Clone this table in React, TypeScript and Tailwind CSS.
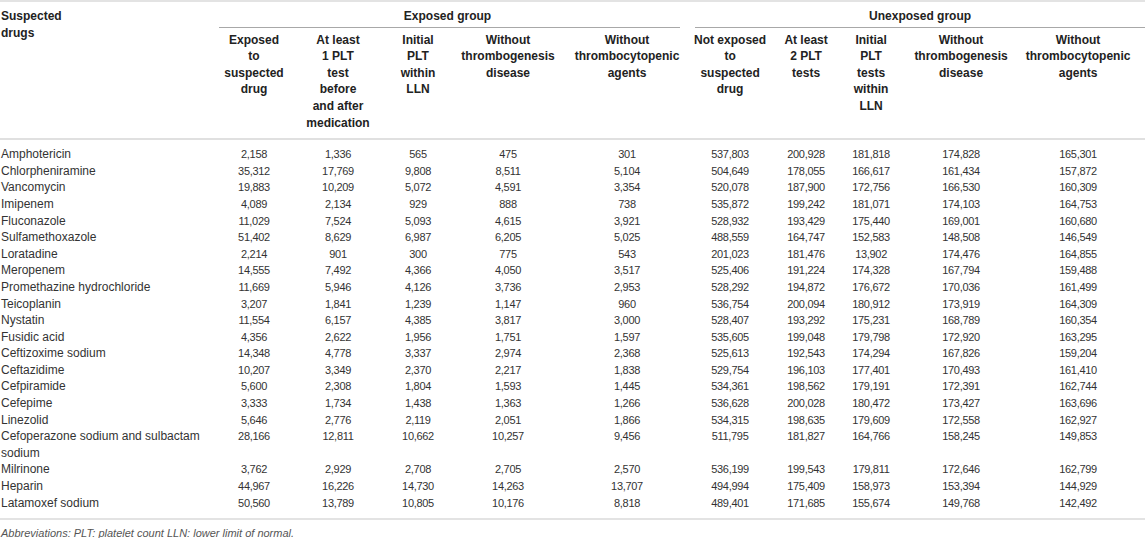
import React from "react";

const rows: [string, ...string[]][] = [
  ["Amphotericin", "2,158", "1,336", "565", "475", "301", "537,803", "200,928", "181,818", "174,828", "165,301"],
  ["Chlorpheniramine", "35,312", "17,769", "9,808", "8,511", "5,104", "504,649", "178,055", "166,617", "161,434", "157,872"],
  ["Vancomycin", "19,883", "10,209", "5,072", "4,591", "3,354", "520,078", "187,900", "172,756", "166,530", "160,309"],
  ["Imipenem", "4,089", "2,134", "929", "888", "738", "535,872", "199,242", "181,071", "174,103", "164,753"],
  ["Fluconazole", "11,029", "7,524", "5,093", "4,615", "3,921", "528,932", "193,429", "175,440", "169,001", "160,680"],
  ["Sulfamethoxazole", "51,402", "8,629", "6,987", "6,205", "5,025", "488,559", "164,747", "152,583", "148,508", "146,549"],
  ["Loratadine", "2,214", "901", "300", "775", "543", "201,023", "181,476", "13,902", "174,476", "164,855"],
  ["Meropenem", "14,555", "7,492", "4,366", "4,050", "3,517", "525,406", "191,224", "174,328", "167,794", "159,488"],
  ["Promethazine hydrochloride", "11,669", "5,946", "4,126", "3,736", "2,953", "528,292", "194,872", "176,672", "170,036", "161,499"],
  ["Teicoplanin", "3,207", "1,841", "1,239", "1,147", "960", "536,754", "200,094", "180,912", "173,919", "164,309"],
  ["Nystatin", "11,554", "6,157", "4,385", "3,817", "3,000", "528,407", "193,292", "175,231", "168,789", "160,354"],
  ["Fusidic acid", "4,356", "2,622", "1,956", "1,751", "1,597", "535,605", "199,048", "179,798", "172,920", "163,295"],
  ["Ceftizoxime sodium", "14,348", "4,778", "3,337", "2,974", "2,368", "525,613", "192,543", "174,294", "167,826", "159,204"],
  ["Ceftazidime", "10,207", "3,349", "2,370", "2,217", "1,838", "529,754", "196,103", "177,401", "170,493", "161,410"],
  ["Cefpiramide", "5,600", "2,308", "1,804", "1,593", "1,445", "534,361", "198,562", "179,191", "172,391", "162,744"],
  ["Cefepime", "3,333", "1,734", "1,438", "1,363", "1,266", "536,628", "200,028", "180,472", "173,427", "163,696"],
  ["Linezolid", "5,646", "2,776", "2,119", "2,051", "1,866", "534,315", "198,635", "179,609", "172,558", "162,927"],
  ["Cefoperazone sodium and sulbactam sodium", "28,166", "12,811", "10,662", "10,257", "9,456", "511,795", "181,827", "164,766", "158,245", "149,853"],
  ["Milrinone", "3,762", "2,929", "2,708", "2,705", "2,570", "536,199", "199,543", "179,811", "172,646", "162,799"],
  ["Heparin", "44,967", "16,226", "14,730", "14,263", "13,707", "494,994", "175,409", "158,973", "153,394", "144,929"],
  ["Latamoxef sodium", "50,560", "13,789", "10,805", "10,176", "8,818", "489,401", "171,685", "155,674", "149,768", "142,492"],
];

const colWidths = ["w-[219px]", "w-[70px]", "w-[98px]", "w-[62px]", "w-[118px]", "w-[120px]", "w-[86px]", "w-[66px]", "w-[64px]", "w-[116px]", "w-[126px]"];

const subHeads: string[][] = [
  ["Exposed", "to", "suspected", "drug"],
  ["At least", "1 PLT", "test", "before", "and after", "medication"],
  ["Initial", "PLT", "within", "LLN"],
  ["Without", "thrombogenesis", "disease"],
  ["Without", "thrombocytopenic", "agents"],
  ["Not exposed", "to", "suspected", "drug"],
  ["At least", "2 PLT", "tests"],
  ["Initial", "PLT", "tests", "within", "LLN"],
  ["Without", "thrombogenesis", "disease"],
  ["Without", "thrombocytopenic", "agents"],
];

export default function App() {
  const last = rows.length - 1;
  return (
    <div className="w-[1145px] h-[538px] bg-white overflow-hidden font-['Liberation_Sans',Arial,sans-serif] text-[12px] leading-[16.6px]">
      <table className="table-fixed border-collapse w-[1145px] border-t-2 border-b-2 border-[#e3e3e3]">
        <colgroup>
          {colWidths.map((w, i) => (
            <col key={i} className={w} />
          ))}
        </colgroup>
        <thead className="font-bold text-[#222] border-b-2 border-[#e0e0e0]">
          <tr>
            <th rowSpan={2} className="align-top text-left pt-[6px] pl-[1px] font-bold">
              Suspected
              <br />
              drugs
            </th>
            <th colSpan={5} className="p-0 pt-[6px] font-bold">
              <div className="mr-[7px] border-b border-[#a8a8a8] pb-[2px] text-center pr-[4px]">Exposed group</div>
            </th>
            <th colSpan={5} className="p-0 pt-[6px] font-bold">
              <div className="ml-[8px] border-b border-[#a8a8a8] pb-[2px] text-center">Unexposed group</div>
            </th>
          </tr>
          <tr>
            {subHeads.map((lines, i) => (
              <th key={i} className={`align-top text-center font-bold whitespace-nowrap pt-[4px] pb-[7px] ${i === 9 ? "pr-[8px]" : ""}`}>
                {lines.map((l, j) => (
                  <div key={j}>{l}</div>
                ))}
              </th>
            ))}
          </tr>
        </thead>
        <tbody className="text-[#333]">
          {rows.map((r, i) => (
            <tr key={i}>
              {r.map((c, j) => (
                <td
                  key={j}
                  className={`align-top ${i === 0 ? "pt-[6px]" : ""} ${i === last ? "pb-[7px]" : ""} ${
                    j === 0 ? "text-left pl-[1px]" : "text-center text-[11px] tracking-[-0.3px]"
                  } ${j === 10 ? "pr-[8px]" : ""}`}
                >
                  {c}
                </td>
              ))}
            </tr>
          ))}
        </tbody>
      </table>
      <div className="pt-[5px] pl-[1px] italic text-[11px] text-[#555]">
        Abbreviations: PLT: platelet count LLN: lower limit of normal.
      </div>
    </div>
  );
}
